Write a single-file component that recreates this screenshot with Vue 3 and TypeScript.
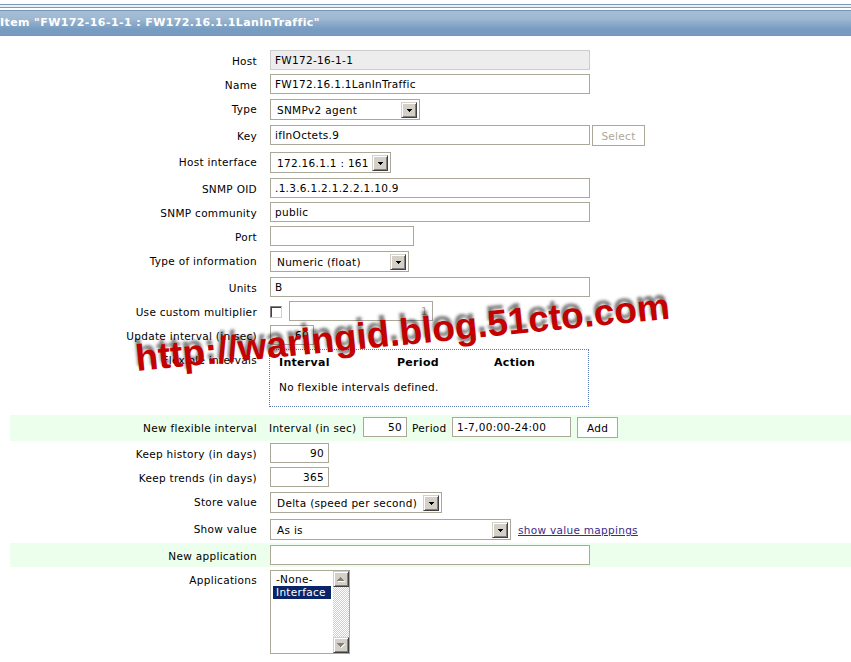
<script setup lang="ts">
type Kind = 'text' | 'select'
interface Row {
  label: string
  id: string
  kind?: Kind
  value?: string
  size?: string
  cls?: string
  lcls?: string
}
const rows: Row[] = [
  { label: 'Host', id: 'host', kind: 'text', value: 'FW172-16-1-1', size: 'wide', cls: 'locked' },
  { label: 'Name', id: 'name', kind: 'text', value: 'FW172.16.1.1LanInTraffic', size: 'wide' },
  { label: 'Type', id: 'type', kind: 'select', value: 'SNMPv2 agent', size: 's-type' },
  { label: 'Key', id: 'key', kind: 'text', value: 'ifInOctets.9', size: 'wide' },
  { label: 'Host interface', id: 'iface', kind: 'select', value: '172.16.1.1 : 161', size: 's-iface' },
  { label: 'SNMP OID', id: 'oid', kind: 'text', value: '.1.3.6.1.2.1.2.2.1.10.9', size: 'wide' },
  { label: 'SNMP community', id: 'community', kind: 'text', value: 'public', size: 'wide' },
  { label: 'Port', id: 'port', kind: 'text', value: '', size: 'medium' },
  { label: 'Type of information', id: 'info', kind: 'select', value: 'Numeric (float)', size: 's-info' },
  { label: 'Units', id: 'units', kind: 'text', value: 'B', size: 'wide' },
  { label: 'Use custom multiplier', id: 'multiplier' },
  { label: 'Update interval (in sec)', id: 'update', kind: 'text', value: '60', size: 'tiny', cls: 'num' },
  { label: 'Flexible intervals', id: 'flexible' },
  { label: 'New flexible interval', id: 'newflex' },
  { label: 'Keep history (in days)', id: 'history', kind: 'text', value: '90', size: 'small', cls: 'num' },
  { label: 'Keep trends (in days)', id: 'trends', kind: 'text', value: '365', size: 'small', cls: 'num' },
  { label: 'Store value', id: 'store', kind: 'select', value: 'Delta (speed per second)', size: 's-store' },
  { label: 'Show value', id: 'show', kind: 'select', value: 'As is', size: 's-show' },
  { label: 'New application', id: 'newapp', kind: 'text', value: '', size: 'wide' },
  { label: 'Applications', id: 'apps' },
]
</script>

<template>
  <div class="page">
    <div class="strip"></div>
    <header class="title">Item "FW172-16-1-1 : FW172.16.1.1LanInTraffic"</header>
    <main class="form">
      <div v-for="r in rows" :key="r.id" class="row" :class="['r-' + r.id, { tall: r.kind === 'select' }]">
        <div class="label"><span>{{ r.label }}</span></div>
        <div class="control">
          <div v-if="r.kind === 'text'" class="field" :class="[r.size, r.cls]"><span>{{ r.value }}</span></div>
          <div v-else-if="r.kind === 'select'" class="select" :class="r.size">
            <span>{{ r.value }}</span>
            <i class="drop"><svg width="5" height="3" viewBox="0 0 5 3" shape-rendering="crispEdges"><path d="M0 0h5v1h-1v1h-1v1h-1v-1h-1v-1h-1z" /></svg></i>
          </div>
          <div v-if="r.id === 'key'" class="button off"><span>Select</span></div>
          <a v-if="r.id === 'show'" class="link">show value mappings</a>
          <template v-if="r.id === 'multiplier'">
            <i class="check"></i>
            <div class="field medium num faded"><span>1</span></div>
          </template>
          <div v-if="r.id === 'flexible'" class="box">
            <div class="head"><b>Interval</b><b>Period</b><b>Action</b></div>
            <div class="empty"><span>No flexible intervals defined.</span></div>
          </div>
          <template v-if="r.id === 'newflex'">
            <span class="inline i1">Interval (in sec)</span>
            <div class="field tiny num"><span>50</span></div>
            <span class="inline i2">Period</span>
            <div class="field period"><span>1-7,00:00-24:00</span></div>
            <div class="button add"><span>Add</span></div>
          </template>
          <div v-if="r.id === 'apps'" class="list">
            <div class="options"><div class="opt">-None-</div><div class="opt picked">Interface</div></div>
            <div class="scroll">
              <i class="arrow"><svg width="8" height="5" viewBox="0 0 8 5" shape-rendering="crispEdges"><path d="M1 5h7v-1h-7z" fill="#fff" /><path d="M3 0h1v1h1v1h1v1h1v1h-7v-1h1v-1h1v-1h1z" fill="#808080" /></svg></i>
              <i class="arrow"><svg width="8" height="5" viewBox="0 0 8 5" shape-rendering="crispEdges"><path d="M7 1h1v1h-1v1h-1v1h-1v1h-1v-1h1v-1h1v-1h1z" fill="#fff" /><path d="M0 0h7v1h-1v1h-1v1h-1v1h-1v-1h-1v-1h-1v-1h-1z" fill="#808080" /></svg></i>
            </div>
          </div>
        </div>
      </div>
    </main>
    <div class="watermark">http://waringid.blog.51cto.com</div>
  </div>
</template>

<style>
body { margin: 0; background: #fff; overflow: hidden; }
</style>
<style scoped>
* { box-sizing: border-box; }
.page { position: relative; width: 851px; height: 662px; overflow: hidden; padding-top: 4px; background: #fff;
  font: 10.5px/14px "DejaVu Sans", Verdana, sans-serif; letter-spacing: .3px; color: #000; white-space: pre; }
.strip { height: 4px; border: solid #7a9bbf; border-width: 1px 0; background: #eaf0f6; }
.title { height: 26px; margin-top: 2px; border-top: 1px solid #7595b8; border-bottom: 1px solid #7297bc;
  background: linear-gradient(#a6bdd5 0%, #9fb9d2 30%, #779cc1 75%, #779cc1 100%); color: #fff; font-weight: bold; font-size: 11px; line-height: 24px; letter-spacing: .4px; }
.form { padding: 12px 0 0 10px; }
.row { display: flex; height: 24px; }
.row.tall { height: 27px; }
.row.r-key, .row.r-newflex { height: 26px; }
.row.r-flexible { height: 68px; }
.row.r-apps { height: 95px; }
.row.r-newflex, .row.r-newapp { background: #ecffec; }
.label { width: 247px; padding-top: 6px; text-align: right; }
.control { display: flex; align-items: flex-start; padding: 2px 0 0 13px; }
.tall .control, .r-apps .control { padding-top: 3px; }
.field { height: 20px; border: 1px solid #aca899; background: #fff; padding: 2px 4px 0 4px; }
.wide { width: 320px; }
.medium { width: 144px; }
.small { width: 59px; }
.tiny { width: 44px; }
.period { width: 119px; }
.num { text-align: right; }
.locked { background: #ededed; border-color: #ccc; }
.faded { color: #aca899; margin-left: 7px; }
.select { display: flex; justify-content: space-between; height: 21px; border: 1px solid #aca899; padding: 3px 2px 0 6px; background: #fff; }
.s-type { width: 150px; }
.s-iface { width: 121px; }
.s-info { width: 139px; }
.s-store { width: 172px; }
.s-show { width: 241px; }
.drop { display: flex; flex: none; align-items: center; justify-content: center; width: 16px; height: 16px; margin-top: -1px; background: #d4d0c8;
  border: 1px solid; border-color: #d4d0c8 #404040 #404040 #d4d0c8; box-shadow: inset 1px 1px #fff, inset -1px -1px #808080; }
.button { height: 21px; border: 1px solid #aca899; background: #fff; text-align: center; padding-top: 3px; }
.off { width: 53px; margin-left: 2px; color: #aca899; }
.add { width: 41px; margin-left: 6px; }
.link { margin: 4px 0 0 7px; color: #3d2b87; text-decoration: underline; }
.check { width: 12px; height: 12px; margin-top: 5px; border: 1px solid; border-color: #808080 #d4d0c8 #d4d0c8 #808080; box-shadow: inset 1px 1px #404040; }
.box { width: 320px; height: 58px; margin-left: -1px; border: 1px dotted #5f79b8; padding: 6px 0 0 9px; }
.head { display: grid; grid-template-columns: 118px 97px 1fr; font-size: 11px; }
.empty { margin-top: 10px; }
.inline { padding-top: 4px; }
.i1 { width: 94px; margin-left: -1px; }
.i2 { width: 40px; margin-left: 5px; }
.list { display: flex; justify-content: space-between; width: 80px; height: 84px; border: 1px solid #aca899; background: #fff; }
.options { width: 58px; margin: 2px 0 0 2px; line-height: 13px; }
.opt { padding-left: 3px; height: 13px; }
.picked { background: #0a246a; color: #fff; }
.scroll { display: flex; flex-direction: column; justify-content: space-between; width: 16px; background: conic-gradient(#d4d0c8 25%, #fff 0 50%, #d4d0c8 0 75%, #fff 0) 0 0 / 2px 2px; }
.arrow { display: flex; align-items: center; justify-content: center; width: 16px; height: 16px; background: #d4d0c8;
  border: 1px solid; border-color: #d4d0c8 #404040 #404040 #d4d0c8; box-shadow: inset 1px 1px #fff, inset -1px -1px #808080; }
.watermark { position: absolute; left: 137px; top: 339px; font: bold 37px/40px "Liberation Sans", Arial, sans-serif; letter-spacing: 0; color: #c40000;
  transform: rotate(-5.6deg); transform-origin: 0 34px; text-shadow: -1px -5px 3px rgba(0, 0, 0, .5); }
</style>
